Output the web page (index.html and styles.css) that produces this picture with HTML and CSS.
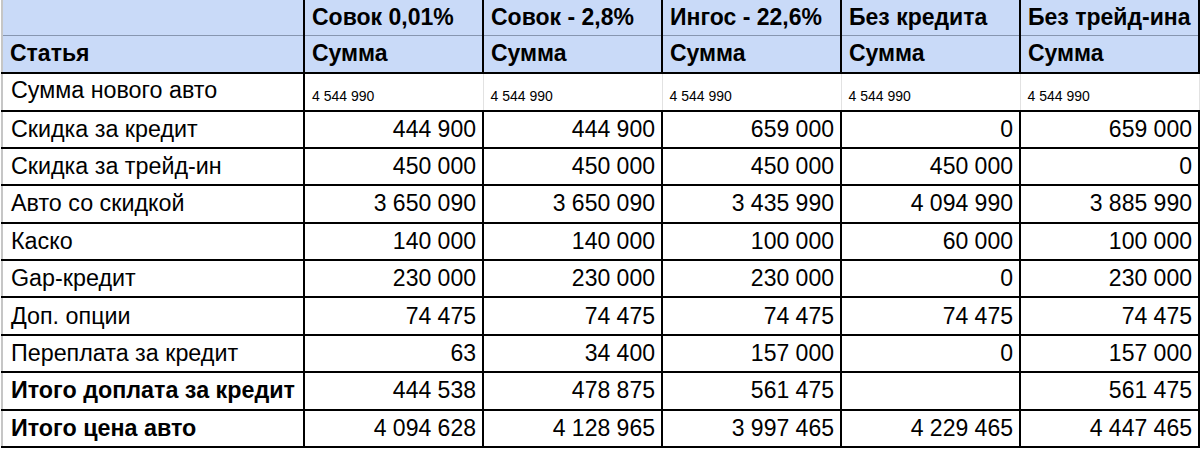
FILE: index.html
```html
<!DOCTYPE html>
<html lang="ru">
<head>
<meta charset="utf-8">
<title>Сравнение</title>
<link rel="stylesheet" href="styles.css">
</head>
<body>
<table class="sheet">
  <colgroup>
    <col class="c-label">
    <col class="c-num"><col class="c-num"><col class="c-num"><col class="c-num"><col class="c-last">
  </colgroup>
  <thead>
    <tr class="h1">
      <th class="corner"></th>
      <th>Совок 0,01%</th>
      <th>Совок - 2,8%</th>
      <th>Ингос - 22,6%</th>
      <th>Без кредита</th>
      <th>Без трейд-ина</th>
    </tr>
    <tr class="h2">
      <th class="first">Статья</th>
      <th>Сумма</th><th>Сумма</th><th>Сумма</th><th>Сумма</th><th>Сумма</th>
    </tr>
  </thead>
  <tbody>
    <tr class="base">
      <td class="label">Сумма нового авто</td>
      <td class="small">4 544 990</td>
      <td class="small">4 544 990</td>
      <td class="small">4 544 990</td>
      <td class="small">4 544 990</td>
      <td class="small">4 544 990</td>
    </tr>
    <tr><td class="label">Скидка за кредит</td><td>444 900</td><td>444 900</td><td>659 000</td><td>0</td><td>659 000</td></tr>
    <tr><td class="label">Скидка за трейд-ин</td><td>450 000</td><td>450 000</td><td>450 000</td><td>450 000</td><td>0</td></tr>
    <tr><td class="label">Авто со скидкой</td><td>3 650 090</td><td>3 650 090</td><td>3 435 990</td><td>4 094 990</td><td>3 885 990</td></tr>
    <tr><td class="label">Каско</td><td>140 000</td><td>140 000</td><td>100 000</td><td>60 000</td><td>100 000</td></tr>
    <tr><td class="label">Gap-кредит</td><td>230 000</td><td>230 000</td><td>230 000</td><td>0</td><td>230 000</td></tr>
    <tr><td class="label">Доп. опции</td><td>74 475</td><td>74 475</td><td>74 475</td><td>74 475</td><td>74 475</td></tr>
    <tr><td class="label">Переплата за кредит</td><td>63</td><td>34 400</td><td>157 000</td><td>0</td><td>157 000</td></tr>
    <tr class="total"><td class="label">Итого доплата за кредит</td><td>444 538</td><td>478 875</td><td>561 475</td><td></td><td>561 475</td></tr>
    <tr class="total"><td class="label">Итого цена авто</td><td>4 094 628</td><td>4 128 965</td><td>3 997 465</td><td>4 229 465</td><td>4 447 465</td></tr>
  </tbody>
</table>
</body>
</html>
```
FILE: styles.css
```css
html, body {
  margin: 0;
  padding: 0;
  background: #ffffff;
}
body {
  font-family: "Liberation Sans", Arial, sans-serif;
  color: #000;
  overflow: hidden;
}
.sheet {
  border-collapse: collapse;
  table-layout: fixed;
  width: 1197px;
  margin-left: 1px;
}
.c-label { width: 302px; }
.c-num { width: 179px; }
.c-last { width: 179px; }

.sheet th {
  background: #c9daf8;
  font-weight: bold;
  font-size: 23px;
  text-align: left;
  padding: 0 0 0 7px;
  border-left: 2px solid #000;
  border-right: 2px solid #000;
  white-space: nowrap;
  overflow: hidden;
  line-height: 1;
}
.h1 th {
  height: 35px;
  border-top: none;
  border-bottom: 1px solid #8796b0;
}
.h2 th {
  height: 35.5px;
  border-bottom: 2px solid #000;
}
.sheet th.corner,
.sheet th.first {
  border-left: 2px solid #c6c6c6;
}

.sheet td {
  height: 37.4px;
  padding: 0 6px 0 8px;
  border: 2px solid #000;
  text-align: right;
  font-size: 23px;
  line-height: 1;
  white-space: nowrap;
  overflow: hidden;
  box-sizing: border-box;
}
.sheet td.label {
  text-align: left;
  font-size: 23.3px;
  padding-left: 8px;
  border-left: 2px solid #c6c6c6;
}
.base td {
  height: 38px;
}
.base td.label {
  border-right: 2px solid #000;
  padding-bottom: 2px;
}
.base td.small {
  font-size: 14px;
  text-align: left;
  vertical-align: bottom;
  padding: 0 0 7px 7px;
  border-left: 1px solid #e2e2e2;
  border-right: 1px solid #e2e2e2;
  border-top: 2px solid #000;
}
.total td.label {
  font-weight: bold;
}
```
